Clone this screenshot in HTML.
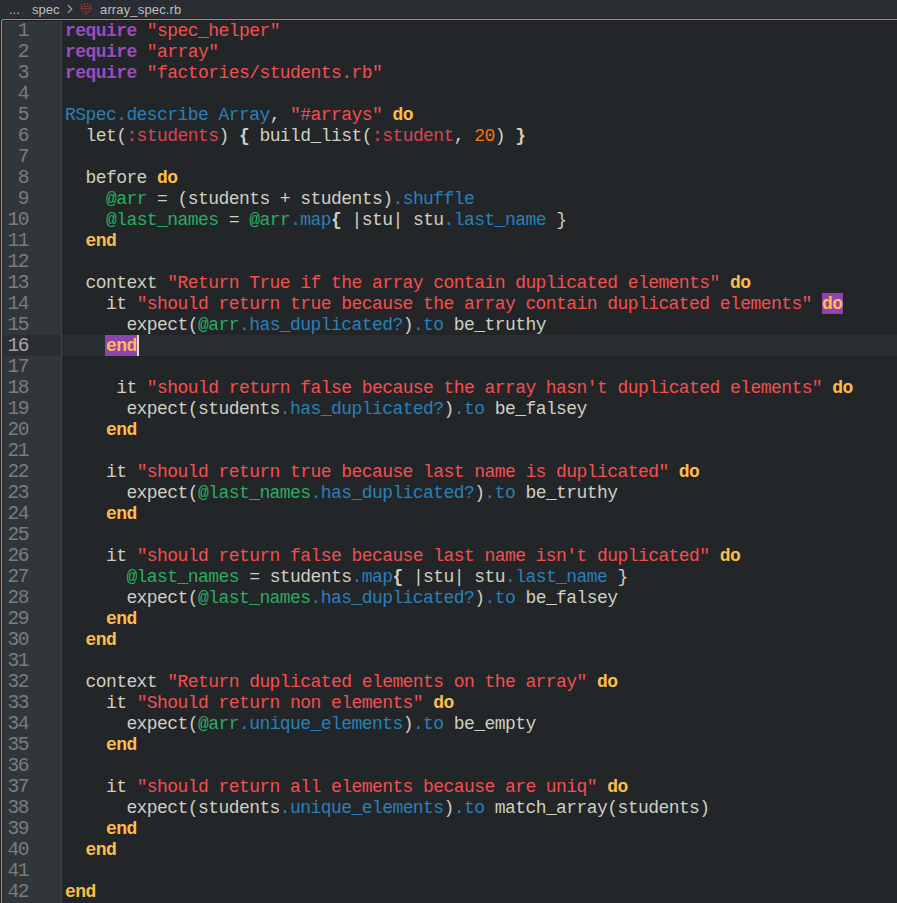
<!DOCTYPE html>
<html><head><meta charset="utf-8"><style>
html,body{margin:0;padding:0;}
body{width:897px;height:903px;overflow:hidden;background:#2a2e32;position:relative;font-family:"Liberation Sans",sans-serif;}
#bc{position:absolute;left:0;top:0;height:18px;width:897px;color:#bcbebf;font-size:13px;}
#bc span{position:absolute;top:2px;white-space:pre;}
#gut{position:absolute;left:3px;top:20px;width:58px;height:900px;background:#31363b;}
#sep{position:absolute;left:61px;top:20px;width:1px;height:900px;background:#3f4347;}
#code{position:absolute;left:62px;top:20px;width:900px;height:900px;background:#232629;}
.ln{position:absolute;left:-2px;margin-top:1px;width:27px;height:21px;line-height:21px;text-align:right;font-family:"Liberation Mono",monospace;font-size:19.5px;letter-spacing:-1.47px;color:#7a7c7d;}
.ln.cur{color:#a5a6a8;}
.gcur{position:absolute;left:0;top:315px;width:58px;height:21px;background:#2a2e32;}
.l{position:absolute;left:3px;margin-top:1px;height:21px;line-height:21px;white-space:pre;font-family:"Liberation Mono",monospace;font-size:18px;color:#cfcfc2;letter-spacing:-0.571px;}
.curline{position:absolute;left:0;top:315px;width:900px;height:21px;background:#2a2e32;}
.k{color:#9b4dbd;font-weight:bold;}
.s{color:#f44f4f;}
.y{color:#da4453;}
.c{color:#2980b9;}
.g{color:#27ae60;}
.o{color:#f67400;}
.d{color:#fdbc4b;font-weight:bold;}
.dh{color:#fdbc4b;font-weight:bold;}
.hl{position:absolute;height:21px;background:#8e44ad;}
.b{font-weight:bold;}
#caret{position:absolute;left:75px;top:315px;width:2px;height:21px;background:#dcdcd0;}
.f{position:absolute;}

</style></head><body>
<div id="bc"><span style="left:9px">...</span><span style="left:32px">spec</span>
<svg style="position:absolute;left:0;top:0" width="100" height="18" viewBox="0 0 100 18"><path d="M67.8 5.2L71.8 9L67.8 12.8" stroke="#a9abad" stroke-width="1.1" fill="none"/>
<g stroke="#7f3636" stroke-width="1.1" fill="none"><path d="M84.5 2.8v2.2M87.5 2.8v2.2M80.6 4.2l1.5 2.3M91.4 4.2l-1.5 2.3M82 6.5h8M80.5 8.5h11M82 6.5l-1.5 2M90 6.5l1.5 2M80.5 8.5L86 14.5L91.5 8.5M86 9v3.5"/></g></svg>
<span style="left:100px;letter-spacing:0.15px">array_spec.rb</span></div>
<div id="gut"><div class="gcur"></div><div class="ln" style="top:0px">1</div><div class="ln" style="top:21px">2</div><div class="ln" style="top:42px">3</div><div class="ln" style="top:63px">4</div><div class="ln" style="top:84px">5</div><div class="ln" style="top:105px">6</div><div class="ln" style="top:126px">7</div><div class="ln" style="top:147px">8</div><div class="ln" style="top:168px">9</div><div class="ln" style="top:189px">10</div><div class="ln" style="top:210px">11</div><div class="ln" style="top:231px">12</div><div class="ln" style="top:252px">13</div><div class="ln" style="top:273px">14</div><div class="ln" style="top:294px">15</div><div class="ln cur" style="top:315px">16</div><div class="ln" style="top:336px">17</div><div class="ln" style="top:357px">18</div><div class="ln" style="top:378px">19</div><div class="ln" style="top:399px">20</div><div class="ln" style="top:420px">21</div><div class="ln" style="top:441px">22</div><div class="ln" style="top:462px">23</div><div class="ln" style="top:483px">24</div><div class="ln" style="top:504px">25</div><div class="ln" style="top:525px">26</div><div class="ln" style="top:546px">27</div><div class="ln" style="top:567px">28</div><div class="ln" style="top:588px">29</div><div class="ln" style="top:609px">30</div><div class="ln" style="top:630px">31</div><div class="ln" style="top:651px">32</div><div class="ln" style="top:672px">33</div><div class="ln" style="top:693px">34</div><div class="ln" style="top:714px">35</div><div class="ln" style="top:735px">36</div><div class="ln" style="top:756px">37</div><div class="ln" style="top:777px">38</div><div class="ln" style="top:798px">39</div><div class="ln" style="top:819px">40</div><div class="ln" style="top:840px">41</div><div class="ln" style="top:861px">42</div></div>
<div id="sep"></div>
<div id="code"><div class="curline"></div><div class="hl" style="left:43px;top:315px;width:32px"></div><div class="hl" style="left:760px;top:273px;width:21px"></div><div class="l" style="top:0px"><span class="k">require</span> <span class="s">"spec_helper"</span></div><div class="l" style="top:21px"><span class="k">require</span> <span class="s">"array"</span></div><div class="l" style="top:42px"><span class="k">require</span> <span class="s">"factories/students.rb"</span></div><div class="l" style="top:63px"></div><div class="l" style="top:84px"><span class="c">RSpec.describe Array</span>, <span class="s">"#arrays"</span> <span class="d">do</span></div><div class="l" style="top:105px">  let(<span class="y">:students</span>) <span class="b">{</span> build_list(<span class="y">:student</span>, <span class="o">20</span>) <span class="b">}</span></div><div class="l" style="top:126px"></div><div class="l" style="top:147px">  before <span class="d">do</span></div><div class="l" style="top:168px">    <span class="g">@arr</span> = (students + students)<span class="c">.shuffle</span></div><div class="l" style="top:189px">    <span class="g">@last_names</span> = <span class="g">@arr</span><span class="c">.map</span><span class="b">{</span> |stu| stu<span class="c">.last_name</span> }</div><div class="l" style="top:210px">  <span class="d">end</span></div><div class="l" style="top:231px"></div><div class="l" style="top:252px">  context <span class="s">"Return True if the array contain duplicated elements"</span> <span class="d">do</span></div><div class="l" style="top:273px">    it <span class="s">"should return true because the array contain duplicated elements"</span> <span class="dh">do</span></div><div class="l" style="top:294px">      expect(<span class="g">@arr</span><span class="c">.has_duplicated?</span>)<span class="c">.to</span> be_truthy</div><div class="l" style="top:315px">    <span class="dh">end</span></div><div class="l" style="top:336px"></div><div class="l" style="top:357px">     it <span class="s">"should return false because the array hasn't duplicated elements"</span> <span class="d">do</span></div><div class="l" style="top:378px">      expect(students<span class="c">.has_duplicated?</span>)<span class="c">.to</span> be_falsey</div><div class="l" style="top:399px">    <span class="d">end</span></div><div class="l" style="top:420px"></div><div class="l" style="top:441px">    it <span class="s">"should return true because last name is duplicated"</span> <span class="d">do</span></div><div class="l" style="top:462px">      expect(<span class="g">@last_names</span><span class="c">.has_duplicated?</span>)<span class="c">.to</span> be_truthy</div><div class="l" style="top:483px">    <span class="d">end</span></div><div class="l" style="top:504px"></div><div class="l" style="top:525px">    it <span class="s">"should return false because last name isn't duplicated"</span> <span class="d">do</span></div><div class="l" style="top:546px">      <span class="g">@last_names</span> = students<span class="c">.map</span><span class="b">{</span> |stu| stu<span class="c">.last_name</span> }</div><div class="l" style="top:567px">      expect(<span class="g">@last_names</span><span class="c">.has_duplicated?</span>)<span class="c">.to</span> be_falsey</div><div class="l" style="top:588px">    <span class="d">end</span></div><div class="l" style="top:609px">  <span class="d">end</span></div><div class="l" style="top:630px"></div><div class="l" style="top:651px">  context <span class="s">"Return duplicated elements on the array"</span> <span class="d">do</span></div><div class="l" style="top:672px">    it <span class="s">"Should return non elements"</span> <span class="d">do</span></div><div class="l" style="top:693px">      expect(<span class="g">@arr</span><span class="c">.unique_elements</span>)<span class="c">.to</span> be_empty</div><div class="l" style="top:714px">    <span class="d">end</span></div><div class="l" style="top:735px"></div><div class="l" style="top:756px">    it <span class="s">"should return all elements because are uniq"</span> <span class="d">do</span></div><div class="l" style="top:777px">      expect(students<span class="c">.unique_elements</span>)<span class="c">.to</span> match_array(students)</div><div class="l" style="top:798px">    <span class="d">end</span></div><div class="l" style="top:819px">  <span class="d">end</span></div><div class="l" style="top:840px"></div><div class="l" style="top:861px"><span class="d">end</span></div><div id="caret"></div></div>
<div class="f" style="left:3px;top:18px;width:900px;height:1px;background:#282425"></div><div class="f" style="left:2px;top:18px;width:1px;height:1px;background:#2b2a2d"></div><div class="f" style="left:0px;top:21px;width:1px;height:900px;background:#282221"></div><div class="f" style="left:0px;top:20px;width:1px;height:1px;background:#2a2628"></div><div class="f" style="left:1px;top:19px;width:1px;height:1px;background:#262324"></div><div class="f" style="left:3px;top:19px;width:900px;height:1px;background:#3daee9"></div><div class="f" style="left:2px;top:19px;width:1px;height:1px;background:#3379a0"></div><div class="f" style="left:1px;top:21px;width:1px;height:900px;background:#3daee9"></div><div class="f" style="left:1px;top:20px;width:1px;height:1px;background:#3a98c9"></div><div class="f" style="left:2px;top:20px;width:1px;height:1px;background:#3688b4"></div><div class="f" style="left:3px;top:20px;width:900px;height:1px;background:#221f20"></div><div class="f" style="left:2px;top:21px;width:1px;height:900px;background:#2f2b2b"></div>
</body></html>
